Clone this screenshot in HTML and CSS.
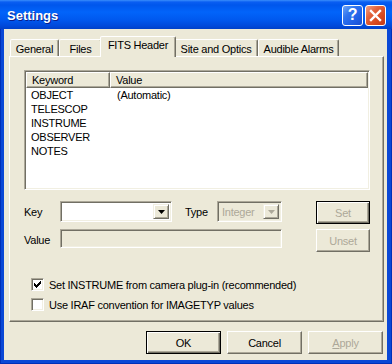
FILE: index.html
```html
<!DOCTYPE html>
<html lang="en">

<head>
  <meta charset="UTF-8">
  <title>Settings</title>
  <link rel="stylesheet" href="styles.css">
</head>

<body>
  <div class="window">
    <div class="titlebar">
      <span class="title">Settings</span>
      <div class="caption-buttons">
        <span class="caption-btn help">?</span>
        <span class="caption-btn close">
          <svg width="19" height="19" viewBox="0 0 19 19">
            <path d="M5 5 L14 14 M14 5 L5 14" stroke="#fff" stroke-width="2.4" stroke-linecap="square" />
          </svg>
        </span>
      </div>
    </div>

    <div class="client">
      <!-- Tabs -->
      <div class="tabs">
        <div class="tab tab-general">General</div>
        <div class="tab tab-files">Files</div>
        <div class="tab tab-fits active">FITS Header</div>
        <div class="tab tab-site">Site and Optics</div>
        <div class="tab tab-alarms">Audible Alarms</div>
      </div>

      <div class="panel">
        <!-- Keyword list -->
        <div class="listview">
          <div class="lv-header">
            <div class="lv-col">Keyword</div>
            <div class="lv-col">Value</div>
          </div>
          <div class="lv-row"><span>OBJECT</span><span>(Automatic)</span></div>
          <div class="lv-row"><span>TELESCOP</span><span></span></div>
          <div class="lv-row"><span>INSTRUME</span><span></span></div>
          <div class="lv-row"><span>OBSERVER</span><span></span></div>
          <div class="lv-row"><span>NOTES</span><span></span></div>
        </div>

        <!-- Key editor -->
        <div class="key-form">
          <label class="form-label">Key</label>
          <div class="combo field">
            <span class="combo-text"></span>
            <span class="combo-btn">
              <svg width="7" height="4" viewBox="0 0 7 4"><path d="M0 0h7L3.5 4z" fill="#000" /></svg>
            </span>
          </div>
          <label class="form-label type-label">Type</label>
          <div class="combo field disabled">
            <span class="combo-text">Integer</span>
            <span class="combo-btn">
              <svg width="7" height="4" viewBox="0 0 7 4"><path d="M0 0h7L3.5 4z" fill="#ACA899" /></svg>
            </span>
          </div>
          <button class="btn btn-small default set-btn" disabled>Set</button>

          <label class="form-label value-label">Value</label>
          <div class="edit field disabled"></div>
          <button class="btn btn-small unset-btn" disabled>Unset</button>
        </div>

        <!-- Options -->
        <div class="checks">
          <label class="check">
            <span class="box">
              <svg width="7" height="7" viewBox="0 0 7 7" shape-rendering="crispEdges">
                <path d="M0 2h1v3H0z M1 3h1v3H1z M2 4h1v3H2z M3 3h1v3H3z M4 2h1v3H4z M5 1h1v3H5z M6 0h1v3H6z" fill="#000" />
              </svg>
            </span>
            Set INSTRUME from camera plug-in (recommended)
          </label>
          <label class="check">
            <span class="box"></span>
            Use IRAF convention for IMAGETYP values
          </label>
        </div>
      </div>

      <div class="dialog-buttons">
        <button class="btn default">OK</button>
        <button class="btn">Cancel</button>
        <button class="btn" disabled><u>A</u>pply</button>
      </div>
    </div>
  </div>
</body>

</html>
```

FILE: styles.css
```css
body {
  margin: 0;
  font-family: "Liberation Sans", Arial, sans-serif;
  font-size: 11px;
  letter-spacing: -0.25px;
  color: #000;
  background: #fff;
}

.window {
  width: 392px;
  height: 364px;
  box-sizing: border-box;
  padding: 0 5px 4px 4px;
  background: #0A48D6;
  box-shadow: inset 1px 0 #0030B8, inset -1px 0 #0030B8, inset 0 -1px #0030B8;
  display: flex;
  flex-direction: column;
}

/* Title bar */
.titlebar {
  height: 29px;
  margin: 0 -5px 0 -4px;
  padding: 0 6px 0 7px;
  display: flex;
  align-items: center;
  justify-content: space-between;
  background: linear-gradient(#3A8DFB 0, #0A5EF2 2px, #0056EC 5px, #0264FA 12px, #0058EE 20px, #0049DA 26px, #0040C8 29px);
}

.title {
  color: #fff;
  font-weight: bold;
  font-size: 13px;
  letter-spacing: 0;
  text-shadow: 1px 1px #0A1E8A;
  padding-top: 2px;
}

.caption-buttons {
  display: flex;
  gap: 2px;
  padding-top: 1px;
}

.caption-btn {
  width: 21px;
  height: 21px;
  box-sizing: border-box;
  border: 1px solid #fff;
  border-radius: 3px;
  display: flex;
  align-items: center;
  justify-content: center;
  color: #fff;
}

.caption-btn.help {
  background: linear-gradient(135deg, #6FA6F8 0%, #2F74EE 35%, #1F5FE6 70%, #1A4FD0 100%);
  font-weight: bold;
  font-size: 16px;
}

.caption-btn.close {
  background: linear-gradient(135deg, #F0A085 0%, #E2633C 35%, #D6481E 70%, #C23A18 100%);
}

/* Client area */
.client {
  flex: 1;
  background: #ECE9D8;
  padding: 7px 3px 0 5px;
}

.tabs {
  display: flex;
  align-items: flex-end;
  height: 20px;
  padding-left: 1px;
}

.tab {
  position: relative;
  height: 17px;
  box-sizing: border-box;
  padding-top: 2px;
  line-height: 14px;
  text-align: center;
  white-space: nowrap;
  background: #ECE9D8;
  border: 1px solid;
  border-bottom: none;
  border-color: #fff #716F64 transparent #fff;
  border-radius: 2px 2px 0 0;
  box-shadow: inset -1px 0 #ACA899;
}

.tab.active {
  z-index: 1;
  height: 21px;
  padding-top: 1px;
  margin: 0 -2px -1px;
}

.tab-general { width: 49px; }
.tab-files { width: 43px; }
.tab-fits { width: 76px; }
.tab-site { width: 84px; }
.tab-alarms { width: 81px; }

.panel {
  width: 375px;
  height: 266px;
  box-sizing: border-box;
  padding: 13px 13px 0 14px;
  border: 1px solid;
  border-color: #fff #716F64 #716F64 #fff;
  box-shadow: inset -1px -1px #ACA899;
}

.field {
  box-sizing: border-box;
  border: 1px solid;
  border-color: #ACA899 #fff #fff #ACA899;
  box-shadow: inset 1px 1px #716F64, inset -1px -1px #F1EFE2;
  background: #fff;
}

.field.disabled {
  background: #ECE9D8;
  color: #ACA899;
}

/* List view */
.listview {
  height: 120px;
  box-sizing: border-box;
  border: 1px solid;
  border-color: #ACA899 #fff #fff #ACA899;
  box-shadow: inset 1px 1px #716F64, inset -1px -1px #F1EFE2;
  background: #fff;
  padding: 1px;
}

.lv-header {
  display: grid;
  grid-template-columns: 84px 1fr;
  height: 16px;
}

.lv-col {
  box-sizing: border-box;
  line-height: 14px;
  padding-left: 5px;
  background: #ECE9D8;
  border: 1px solid;
  border-color: #fff #716F64 #716F64 #fff;
  box-shadow: inset -1px -1px #ACA899;
}

.lv-row {
  display: grid;
  grid-template-columns: 84px 1fr;
  height: 14px;
  line-height: 14px;
}

.lv-row span {
  padding-left: 5px;
}

.lv-row span + span {
  padding-left: 7px;
}

/* Key editor */
.key-form {
  display: grid;
  grid-template-columns: 36px 112px 45px 65px 1fr 54px;
  grid-template-rows: 21px 19px;
  row-gap: 7px;
  margin-top: 11px;
}

.form-label {
  align-self: center;
}

.type-label {
  padding-left: 13px;
}

.value-label {
  padding-top: 3px;
}

.combo {
  display: flex;
  padding: 2px;
}

.combo-text {
  flex: 1;
  line-height: 17px;
  padding-left: 2px;
}

.combo-btn {
  width: 16px;
  box-sizing: border-box;
  display: flex;
  align-items: center;
  justify-content: center;
  background: #ECE9D8;
  border: 1px solid;
  border-color: #F1EFE2 #716F64 #716F64 #F1EFE2;
  box-shadow: inset 1px 1px #fff, inset -1px -1px #ACA899;
}

.set-btn {
  grid-column: 6;
  height: 20px;
}

.edit {
  grid-column: 2 / 5;
}

.unset-btn {
  grid-column: 6;
  height: 19px;
}

/* Buttons */
.btn {
  font: inherit;
  letter-spacing: inherit;
  color: #000;
  width: 75px;
  height: 23px;
  padding: 0;
  background: #ECE9D8;
  border: 1px solid;
  border-color: #fff #716F64 #716F64 #fff;
  box-shadow: inset -1px -1px #ACA899;
}

.btn.default {
  border-color: #000;
  box-shadow: inset 1px 1px #fff, inset -1px -1px #716F64, inset -2px -2px #ACA899;
}

.btn-small {
  width: 54px;
}

.btn:disabled {
  color: #ACA899;
}

/* Check boxes */
.checks {
  margin-top: 30px;
  padding-left: 7px;
  display: flex;
  flex-direction: column;
  gap: 7px;
}

.check {
  display: flex;
  align-items: center;
  gap: 5px;
  height: 13px;
}

.box {
  width: 13px;
  height: 13px;
  box-sizing: border-box;
  border: 1px solid;
  border-color: #ACA899 #fff #fff #ACA899;
  box-shadow: inset 1px 1px #716F64, inset -1px -1px #F1EFE2;
  background: #fff;
  padding: 2px;
  display: flex;
}

.dialog-buttons {
  display: flex;
  justify-content: flex-end;
  gap: 6px;
  margin-top: 9px;
  padding-right: 1px;
}
```
